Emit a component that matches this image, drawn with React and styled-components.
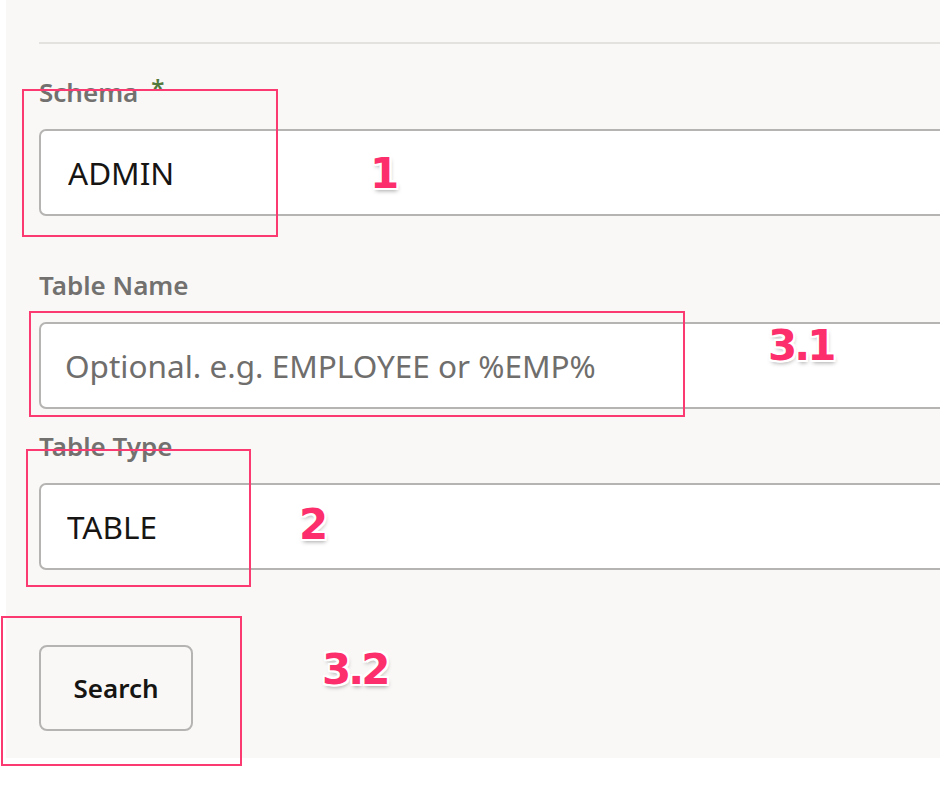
import React from "react"
import styled, { createGlobalStyle } from "styled-components"

const GlobalStyle = createGlobalStyle`
	body {
		margin: 0;
		background: #ffffff;
		font-family: "Noto Sans", "Open Sans", sans-serif;
	}
`

const Page = styled.div`
	position: relative;
	width: 940px;
	height: 808px;
	overflow: hidden;
`

const Panel = styled.div`
	margin-left: 6px;
	width: 934px;
	box-sizing: border-box;
	padding: 42px 0 27px 33px;
	background: #f9f8f6;
	overflow: hidden;
`

const Divider = styled.div`
	height: 2px;
	background: #e3e2df;
	margin-bottom: 32px;
`

const Field = styled.div`
	margin-top: ${props => props.gap || 0}px;
`

const Label = styled.div`
	display: flex;
	align-items: flex-start;
	font-size: 26px;
	font-weight: 600;
	line-height: 31px;
	padding-top: 1px;
	color: #72716f;
`

const Required = styled.span`
	margin-left: 13px;
	font-size: 24px;
	line-height: 22px;
	color: #537a3c;
`

const TextInput = styled.input`
	display: block;
	width: calc(100% + 40px);
	height: 87px;
	margin-top: 21px;
	box-sizing: border-box;
	padding: 0 0 0 ${props => props.inset || 24}px;
	border: 2px solid #b5b4b2;
	border-radius: 7px;
	background: #ffffff;
	font-family: "Noto Sans", sans-serif;
	font-size: 31.5px;
	color: #161513;
	outline: none;

	&::placeholder {
		color: #6f6e6c;
	}
`

const Button = styled.button`
	display: block;
	margin-top: 75px;
	width: 154px;
	height: 86px;
	box-sizing: border-box;
	border: 2px solid #b5b4b2;
	border-radius: 8px;
	background: transparent;
	font-family: "Noto Sans", sans-serif;
	font-size: 26px;
	font-weight: 600;
	color: #161513;
`

// callout overlay drawn on top of the form
const Callout = styled.div`
	position: absolute;
	left: ${props => props.x}px;
	top: ${props => props.y}px;
	width: ${props => props.w}px;
	height: ${props => props.h}px;
	box-sizing: border-box;
	border: 2px solid #fb3a72;
	pointer-events: none;
`

const Marker = styled.div`
	position: absolute;
	left: ${props => props.x}px;
	top: ${props => props.y}px;
	font-family: "DejaVu Sans", "Liberation Sans", sans-serif;
	font-size: 42px;
	font-weight: 700;
	line-height: 1;
	letter-spacing: -3px;
	color: #fc2f6c;
	text-shadow:
		2px 0 0 #fff, -2px 0 0 #fff, 0 2px 0 #fff, 0 -2px 0 #fff,
		2px 2px 0 #fff, -2px -2px 0 #fff, 2px -2px 0 #fff, -2px 2px 0 #fff,
		1px 3px 4px rgba(0, 0, 0, 0.35);
`

const callouts = [
	{ x: 22, y: 89, w: 256, h: 148 },
	{ x: 29, y: 311, w: 656, h: 106 },
	{ x: 26, y: 449, w: 225, h: 138 },
	{ x: 1, y: 616, w: 241, h: 150 },
]

const markers = [
	{ x: 370, y: 153, text: "1" },
	{ x: 768, y: 325, text: "3.1" },
	{ x: 299, y: 504, text: "2" },
	{ x: 322, y: 649, text: "3.2" },
]

export default function App() {
	return (
		<Page>
			<GlobalStyle />
			<Panel>
				<Divider />
				<Field>
					<Label>
						Schema<Required>*</Required>
					</Label>
					<TextInput inset={27} defaultValue="ADMIN" readOnly />
				</Field>
				<Field gap={53}>
					<Label>Table Name</Label>
					<TextInput placeholder="Optional. e.g. EMPLOYEE or %EMP%" />
				</Field>
				<Field gap={21}>
					<Label>Table Type</Label>
					<TextInput inset={26} defaultValue="TABLE" readOnly />
				</Field>
				<Button>Search</Button>
			</Panel>
			{callouts.map((c, i) => (
				<Callout key={i} {...c} />
			))}
			{markers.map(m => (
				<Marker key={m.text} x={m.x} y={m.y}>
					{m.text}
				</Marker>
			))}
		</Page>
	)
}
